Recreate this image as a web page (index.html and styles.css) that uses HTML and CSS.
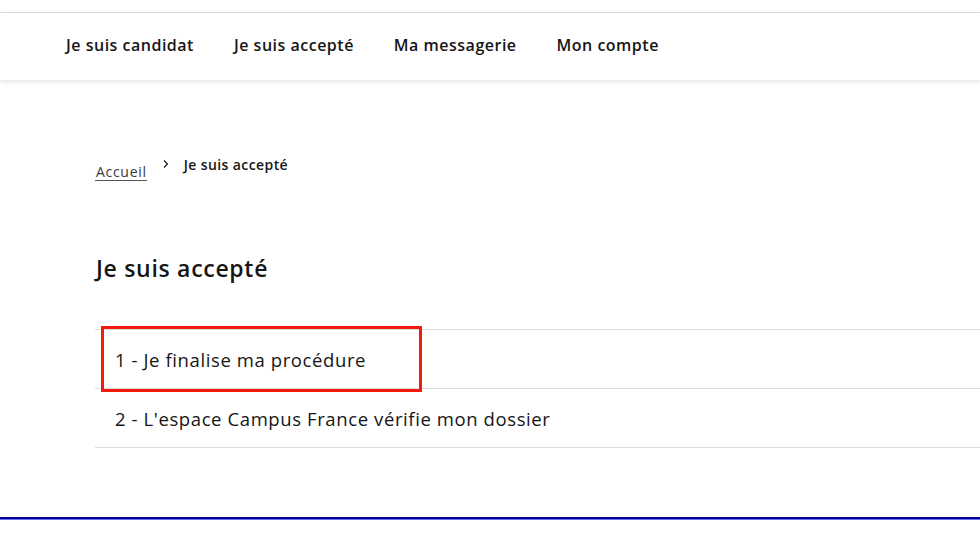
FILE: index.html
```html
<!DOCTYPE html>
<html lang="fr">
<head>
<meta charset="utf-8">
<title>Je suis accepté</title>
<link rel="stylesheet" href="styles.css">
</head>
<body>
<div class="topline"></div>
<header class="header">
  <nav class="nav">
    <a class="nav-link" href="#">Je suis candidat</a>
    <a class="nav-link" href="#">Je suis accepté</a>
    <a class="nav-link" href="#">Ma messagerie</a>
    <a class="nav-link" href="#">Mon compte</a>
  </nav>
</header>
<main class="main">
  <div class="breadcrumb">
    <a class="crumb-link" href="#">Accueil</a>
    <svg class="chevron" width="8" height="10" viewBox="0 0 8 10"><path d="M2 1.5 L5.5 5 L2 8.5" fill="none" stroke="#161616" stroke-width="1.2"/></svg>
    <span class="crumb-current">Je suis accepté</span>
  </div>
  <h1 class="title">Je suis accepté</h1>
  <ul class="steps">
    <li class="step"><span class="step-label highlighted">1 - Je finalise ma procédure</span></li>
    <li class="step"><span class="step-label">2 - L'espace Campus France vérifie mon dossier</span></li>
  </ul>
</main>
<footer class="footer"></footer>
</body>
</html>
```

FILE: styles.css
```css
*, *::before, *::after { box-sizing: border-box; }
html, body { margin: 0; padding: 0; background: #fff; }
body {
  font-family: "Open Sans", sans-serif;
  color: #161616;
  height: 551px;
  overflow: hidden;
  position: relative;
}
.topline {
  height: 13px;
  border-bottom: 1px solid #dddddd;
}
.header {
  height: 67px;
  background: #fff;
  box-shadow: 0 2px 4px rgba(0,0,0,0.10);
  position: relative;
}
.nav {
  display: flex;
  gap: 40px;
  padding-left: 66px;
  height: 100%;
  align-items: center;
  padding-bottom: 3px;
}
.nav-link {
  font-size: 16px;
  font-weight: 600;
  letter-spacing: 0.5px;
  color: #161616;
  text-decoration: none;
}
.main {
  padding-left: 95px;
  padding-top: 76px;
}
.breadcrumb {
  display: flex;
  align-items: flex-start;
  height: 26px;
}
.crumb-link {
  font-size: 14px;
  letter-spacing: 0.7px;
  color: #3a3a3a;
  text-decoration: none;
  border-bottom: 1px solid #555;
  margin-top: 7px;
  line-height: 17px;
  padding-left: 1px;
}
.chevron {
  margin: 3px 14px 0 15px;
}
.crumb-current {
  font-size: 14px;
  font-weight: 600;
  letter-spacing: 0.4px;
  line-height: 16px;
  margin-top: 1px;
}
.title {
  font-size: 23px;
  font-weight: 600;
  letter-spacing: 0.7px;
  margin: 70px 0 0 1px;
  line-height: 32px;
}
.steps {
  list-style: none;
  margin: 45px 0 0 0;
  padding: 0;
  border-top: 1px solid #dddddd;
}
.step {
  height: 59px;
  border-bottom: 1px solid #dddddd;
  display: flex;
  align-items: center;
  font-size: 18.5px;
  letter-spacing: 0.6px;
  position: relative;
}
.step-label {
  padding-left: 20px;
}
.highlighted::after {
  content: "";
  position: absolute;
  left: 6px;
  top: -4px;
  width: 321px;
  height: 66px;
  border: 3px solid #f41a0d;
}
.footer {
  position: absolute;
  left: 0;
  right: 0;
  top: 517px;
  height: 3px;
  border-top: 2px solid #000091;
  border-bottom: 1px solid #6a6af4;
}
```
